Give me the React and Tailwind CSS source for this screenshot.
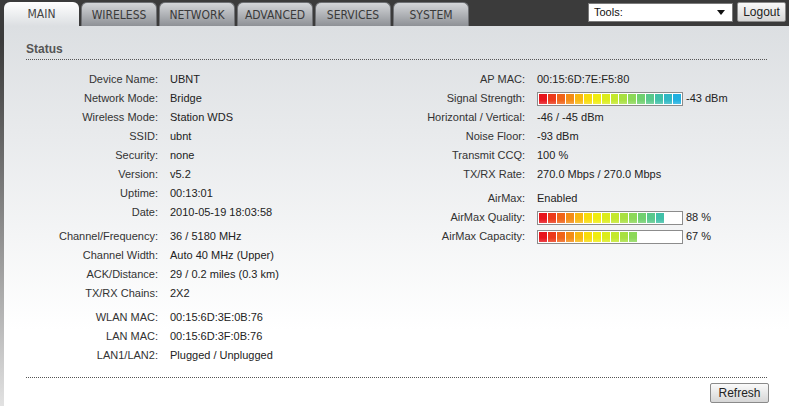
import React from 'react';

const leftRows = [
  [
    ['Device Name:', 'UBNT'],
    ['Network Mode:', 'Bridge'],
    ['Wireless Mode:', 'Station WDS'],
    ['SSID:', 'ubnt'],
    ['Security:', 'none'],
    ['Version:', 'v5.2'],
    ['Uptime:', '00:13:01'],
    ['Date:', '2010-05-19 18:03:58'],
  ],
  [
    ['Channel/Frequency:', '36 / 5180 MHz'],
    ['Channel Width:', 'Auto 40 MHz (Upper)'],
    ['ACK/Distance:', '29 / 0.2 miles (0.3 km)'],
    ['TX/RX Chains:', '2X2'],
  ],
  [
    ['WLAN MAC:', '00:15:6D:3E:0B:76'],
    ['LAN MAC:', '00:15:6D:3F:0B:76'],
    ['LAN1/LAN2:', 'Plugged / Unplugged'],
  ],
];

const segColors = [
  '#e8141c', '#ec3a1a', '#f06418', '#f48c14', '#f8b810', '#f8dc0c', '#f0ec10', '#dcec1c',
  '#c4e82c', '#a8e040', '#8cd858', '#70d070', '#58c88c', '#40c0a8', '#30b8c4', '#20b0e0',
];

function Meter({ count }) {
  return (
    <div className="flex h-[14px] w-[146px] gap-[1px] border border-[#8c8c8c] bg-white p-[1px]">
      {segColors.slice(0, count).map((c, i) => (
        <div
          key={i}
          className="h-full w-[8px]"
          style={{ background: `linear-gradient(to bottom, ${c}, ${c} 60%, ${c}cc)` }}
        />
      ))}
    </div>
  );
}

function Row({ label, children, labelW }) {
  return (
    <div className="flex h-[19px] items-center">
      <div className={`${labelW} shrink-0 text-right text-[#333]`}>{label}</div>
      <div className="pl-[12px] text-[#222]">{children}</div>
    </div>
  );
}

const tabs = ['MAIN', 'WIRELESS', 'NETWORK', 'ADVANCED', 'SERVICES', 'SYSTEM'];

export default function App() {
  return (
    <div
      className="flex h-[406px] w-[789px] flex-col overflow-hidden bg-linear-to-b from-[#3b3b3b] from-10% to-[#e2e2e2] text-[11px]"
      style={{ fontFamily: '"Liberation Sans", Arial, sans-serif' }}
    >
      {/* Header with tabs */}
      <div className="flex h-[26px] shrink-0 items-end justify-between">
        <div className="flex gap-[2px] pl-[4px]">
          {tabs.map((t, i) => (
            <div
              key={t}
              className={
                i === 0
                  ? 'flex h-[24px] w-[75px] items-center justify-center rounded-t-[6px] bg-linear-to-b from-white to-[#dcdfe2] text-[12px] text-[#444]'
                  : 'flex h-[24px] w-[76px] items-center justify-center rounded-t-[6px] border-x border-t border-[#6e7074] bg-linear-to-b from-[#d4d6d9] to-[#8e9196] text-[12px] text-[#3a3a3a]'
              }
              style={{ fontFamily: '"Liberation Sans Narrow", "DejaVu Sans Condensed", "Arial Narrow", sans-serif' }}
            >
              {t}
            </div>
          ))}
        </div>
        <div className="mb-[4px] mr-[3px] flex items-center gap-[4px]">
          <div className="flex h-[19px] w-[145px] items-center justify-between border border-[#7a7a7a] bg-white px-[5px] text-[11px] text-[#111]">
            <span>Tools:</span>
            <svg width="8" height="5" viewBox="0 0 8 5" className="mr-[2px]">
              <path d="M0 0h8L4 5z" fill="#111" />
            </svg>
          </div>
          <button className="h-[20px] w-[49px] rounded-[2px] border border-[#8a8a8a] bg-linear-to-b from-[#fafafa] to-[#d6d6d6] text-[12px] text-[#222]">
            Logout
          </button>
        </div>
      </div>

      {/* Panel */}
      <div className="ml-[4px] flex flex-1 flex-col bg-linear-to-b from-[#dcdfe2] to-white to-80% px-[22px]">
        <div className="mt-[14px] border-b border-dotted border-[#555] pb-[1px] text-[12px] font-bold text-[#555]">
          Status
        </div>

        <div className="flex pt-[10px]">
          {/* Left column */}
          <div className="w-[360px]">
            {leftRows.map((group, gi) => (
              <div key={gi} className={gi > 0 ? 'mt-[5px]' : ''}>
                {group.map(([l, v]) => (
                  <Row key={l} label={l} labelW="w-[132px]">
                    {v}
                  </Row>
                ))}
              </div>
            ))}
          </div>

          {/* Right column */}
          <div>
            <Row label="AP MAC:" labelW="w-[139px]">00:15:6D:7E:F5:80</Row>
            <Row label="Signal Strength:" labelW="w-[139px]">
              <div className="flex items-center gap-[3px]">
                <Meter count={16} />
                <span>-43 dBm</span>
              </div>
            </Row>
            <Row label="Horizontal / Vertical:" labelW="w-[139px]">-46 / -45 dBm</Row>
            <Row label="Noise Floor:" labelW="w-[139px]">-93 dBm</Row>
            <Row label="Transmit CCQ:" labelW="w-[139px]">100 %</Row>
            <Row label="TX/RX Rate:" labelW="w-[139px]">270.0 Mbps / 270.0 Mbps</Row>
            <div className="mt-[5px]">
              <Row label="AirMax:" labelW="w-[139px]">Enabled</Row>
              <Row label="AirMax Quality:" labelW="w-[139px]">
                <div className="flex items-center gap-[3px]">
                  <Meter count={14} />
                  <span>88 %</span>
                </div>
              </Row>
              <Row label="AirMax Capacity:" labelW="w-[139px]">
                <div className="flex items-center gap-[3px]">
                  <Meter count={11} />
                  <span>67 %</span>
                </div>
              </Row>
            </div>
          </div>
        </div>

        <div className="mt-[12px] border-b border-dotted border-[#555]" />
        <div className="flex justify-end">
          <button className="mr-[-2px] mt-[5px] h-[20px] w-[59px] rounded-[2px] border border-[#8a8a8a] bg-linear-to-b from-[#fafafa] to-[#d6d6d6] text-[12px] text-[#222]">
            Refresh
          </button>
        </div>
      </div>
    </div>
  );
}
